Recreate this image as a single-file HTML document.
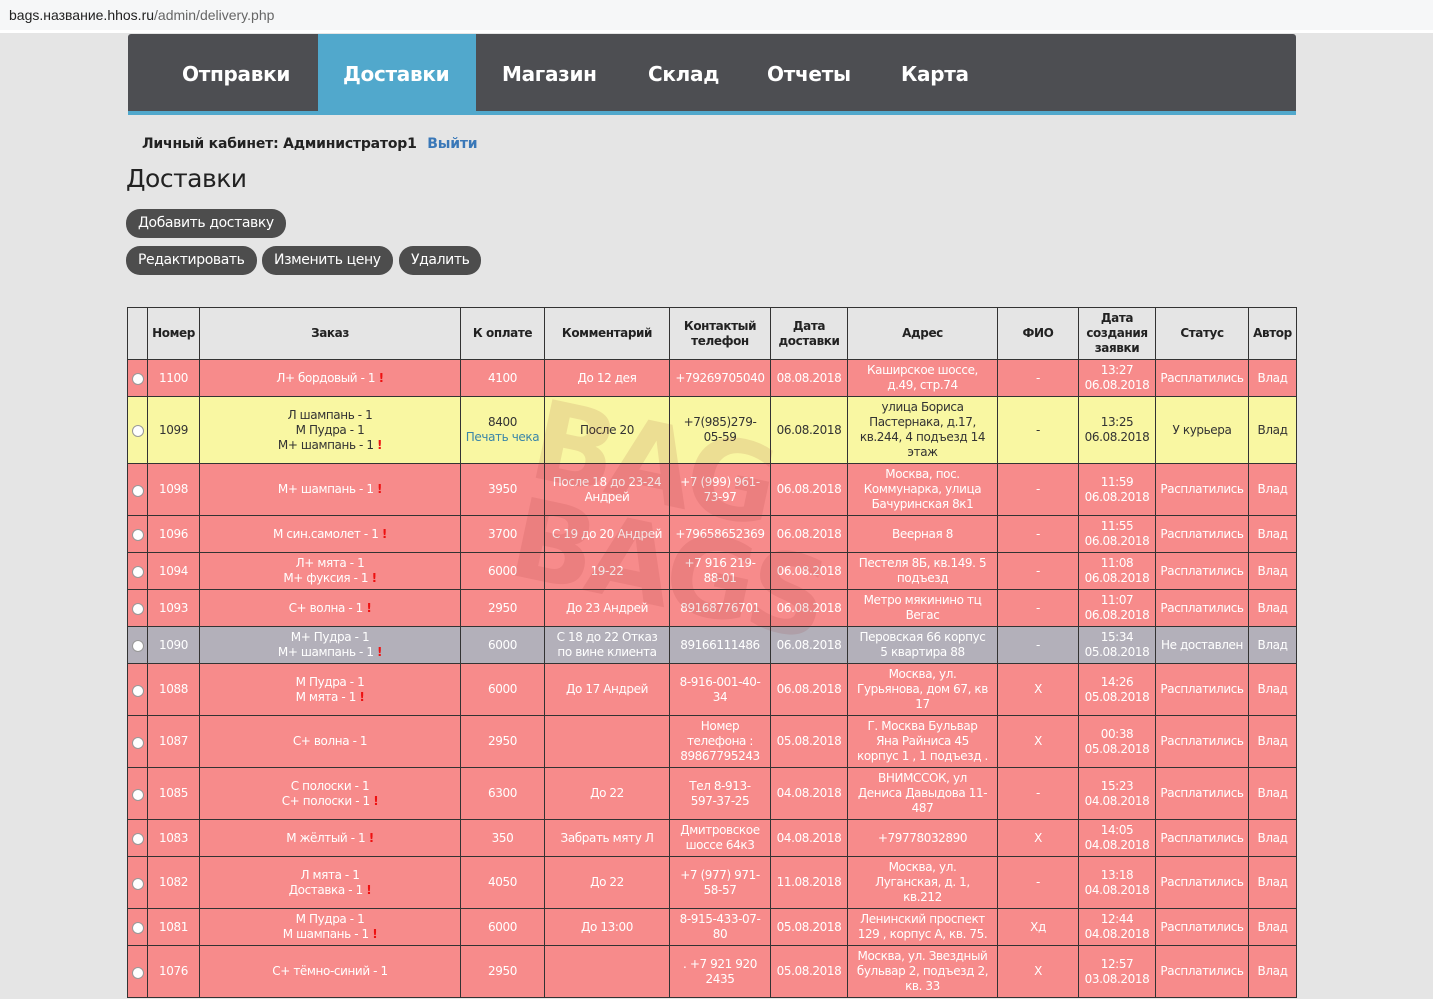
<!DOCTYPE html>
<html><head><meta charset="utf-8"><style>
body{margin:0;background:#e5e5e5;font-family:"DejaVu Sans","Liberation Sans",sans-serif;width:1433px;height:999px;overflow:hidden;position:relative}
.url{height:30px;background:#f6f7f8;border-bottom:3px solid #fff;font:14px "Liberation Sans",sans-serif;color:#222;line-height:30px;padding-left:9px}
.url span{color:#666}
.nav{position:absolute;left:128px;top:34px;width:1168px;height:77px;background:#4d4e52;border-bottom:4px solid #51a8cc;border-radius:3px 3px 0 0}
.nav a{position:absolute;display:block;top:0;height:77px;line-height:80px;color:#fff;font-weight:bold;font-size:20px;font-family:"DejaVu Sans",sans-serif;text-decoration:none;letter-spacing:-0.3px}
.lk{position:absolute;left:142px;top:136px;font:bold 14px "DejaVu Sans",sans-serif;color:#222;letter-spacing:-0.2px}
.lk b{color:#3a78b8;margin-left:6px}
h1{position:absolute;left:126px;top:164px;margin:0;font:25px "DejaVu Sans",sans-serif;color:#222;letter-spacing:-0.5px}
.btn{position:absolute;height:29px;line-height:29px;background:#4d4d4d;color:#fff;border-radius:14px;font-size:14px;padding:0 12px;letter-spacing:-0.4px}
table{position:absolute;left:127px;top:307px;border-collapse:collapse;table-layout:fixed;width:1170px}
td,th{border:1px solid #333;text-align:center;font-size:12px;padding:0 1px;overflow:hidden;line-height:15px;color:#fff;letter-spacing:-0.4px;white-space:nowrap}
th{background:#e5e5e5;color:#222}
tr.r td{background:#f78b8b}
tr.y td{background:#f9f7a2;color:#333}
tr.g td{background:#b3b0ba}
.e{color:#e11;font-weight:bold}
.rad{display:inline-block;width:10px;height:10px;border-radius:50%;background:#fff;border:1px solid #999;margin-top:6px}
.p{color:#3b86a8}
.wm{position:absolute;left:520px;top:420px;font:bold 110px "DejaVu Sans",sans-serif;color:rgba(150,40,40,0.12);transform:rotate(12deg);letter-spacing:-6px;line-height:100px;pointer-events:none}
</style></head><body>
<div class="url">bags.название.hhos.ru<span>/admin/delivery.php</span></div>
<div class="nav">
<div style="position:absolute;left:190px;top:0;width:158px;height:77px;background:#51a8cc"></div>
<a style="left:54px">Отправки</a><a style="left:215px">Доставки</a><a style="left:374px">Магазин</a><a style="left:520px">Склад</a><a style="left:639px">Отчеты</a><a style="left:773px">Карта</a>
</div>
<div class="lk">Личный кабинет: Администратор1 <b>Выйти</b></div>
<h1>Доставки</h1>
<div class="btn" style="left:126px;top:209px">Добавить доставку</div>
<div class="btn" style="left:126px;top:246px">Редактировать</div>
<div class="btn" style="left:262px;top:246px">Изменить цену</div>
<div class="btn" style="left:399px;top:246px">Удалить</div>
<table>
<colgroup><col style="width:20px"><col style="width:52px"><col style="width:261px"><col style="width:84px"><col style="width:125px"><col style="width:101px"><col style="width:77px"><col style="width:150px"><col style="width:81px"><col style="width:77px"><col style="width:93px"><col style="width:48px"></colgroup>
<tr style="height:52px"><th></th><th>Номер</th><th>Заказ</th><th>К оплате</th><th>Комментарий</th><th>Контактый<br>телефон</th><th>Дата<br>доставки</th><th>Адрес</th><th>ФИО</th><th>Дата<br>создания<br>заявки</th><th>Статус</th><th>Автор</th></tr>
<tr class="r" style="height:37px"><td><span class="rad"></span></td><td>1100</td><td>Л+ бордовый - 1 <span class="e">!</span></td><td>4100</td><td>До 12 дея</td><td>+79269705040</td><td>08.08.2018</td><td>Каширское шоссе,<br>д.49, стр.74</td><td>-</td><td>13:27<br>06.08.2018</td><td>Расплатились</td><td>Влад</td></tr>
<tr class="y" style="height:67px"><td><span class="rad"></span></td><td>1099</td><td>Л шампань - 1<br>М Пудра - 1<br>М+ шампань - 1 <span class="e">!</span></td><td>8400<br><span class="p">Печать чека</span></td><td>После 20</td><td>+7(985)279-<br>05-59</td><td>06.08.2018</td><td>улица Бориса<br>Пастернака, д.17,<br>кв.244, 4 подъезд 14<br>этаж</td><td>-</td><td>13:25<br>06.08.2018</td><td>У курьера</td><td>Влад</td></tr>
<tr class="r" style="height:52px"><td><span class="rad"></span></td><td>1098</td><td>М+ шампань - 1 <span class="e">!</span></td><td>3950</td><td>После 18 до 23-24<br>Андрей</td><td>+7 (999) 961-<br>73-97</td><td>06.08.2018</td><td>Москва, пос.<br>Коммунарка, улица<br>Бачуринская 8к1</td><td>-</td><td>11:59<br>06.08.2018</td><td>Расплатились</td><td>Влад</td></tr>
<tr class="r" style="height:37px"><td><span class="rad"></span></td><td>1096</td><td>М син.самолет - 1 <span class="e">!</span></td><td>3700</td><td>С 19 до 20 Андрей</td><td>+79658652369</td><td>06.08.2018</td><td>Веерная 8</td><td>-</td><td>11:55<br>06.08.2018</td><td>Расплатились</td><td>Влад</td></tr>
<tr class="r" style="height:37px"><td><span class="rad"></span></td><td>1094</td><td>Л+ мята - 1<br>М+ фуксия - 1 <span class="e">!</span></td><td>6000</td><td>19-22</td><td>+7 916 219-<br>88-01</td><td>06.08.2018</td><td>Пестеля 8Б, кв.149. 5<br>подъезд</td><td>-</td><td>11:08<br>06.08.2018</td><td>Расплатились</td><td>Влад</td></tr>
<tr class="r" style="height:37px"><td><span class="rad"></span></td><td>1093</td><td>С+ волна - 1 <span class="e">!</span></td><td>2950</td><td>До 23 Андрей</td><td>89168776701</td><td>06.08.2018</td><td>Метро мякинино тц<br>Вегас</td><td>-</td><td>11:07<br>06.08.2018</td><td>Расплатились</td><td>Влад</td></tr>
<tr class="g" style="height:37px"><td><span class="rad"></span></td><td>1090</td><td>М+ Пудра - 1<br>М+ шампань - 1 <span class="e">!</span></td><td>6000</td><td>С 18 до 22 Отказ<br>по вине клиента</td><td>89166111486</td><td>06.08.2018</td><td>Перовская 66 корпус<br>5 квартира 88</td><td>-</td><td>15:34<br>05.08.2018</td><td>Не доставлен</td><td>Влад</td></tr>
<tr class="r" style="height:52px"><td><span class="rad"></span></td><td>1088</td><td>М Пудра - 1<br>М мята - 1 <span class="e">!</span></td><td>6000</td><td>До 17 Андрей</td><td>8-916-001-40-<br>34</td><td>06.08.2018</td><td>Москва, ул.<br>Гурьянова, дом 67, кв<br>17</td><td>Х</td><td>14:26<br>05.08.2018</td><td>Расплатились</td><td>Влад</td></tr>
<tr class="r" style="height:52px"><td><span class="rad"></span></td><td>1087</td><td>С+ волна - 1</td><td>2950</td><td></td><td>Номер<br>телефона :<br>89867795243</td><td>05.08.2018</td><td>Г. Москва Бульвар<br>Яна Райниса 45<br>корпус 1 , 1 подъезд .</td><td>Х</td><td>00:38<br>05.08.2018</td><td>Расплатились</td><td>Влад</td></tr>
<tr class="r" style="height:52px"><td><span class="rad"></span></td><td>1085</td><td>С полоски - 1<br>С+ полоски - 1 <span class="e">!</span></td><td>6300</td><td>До 22</td><td>Тел 8-913-<br>597-37-25</td><td>04.08.2018</td><td>ВНИМССОК, ул<br>Дениса Давыдова 11-<br>487</td><td>-</td><td>15:23<br>04.08.2018</td><td>Расплатились</td><td>Влад</td></tr>
<tr class="r" style="height:37px"><td><span class="rad"></span></td><td>1083</td><td>М жёлтый - 1 <span class="e">!</span></td><td>350</td><td>Забрать мяту Л</td><td>Дмитровское<br>шоссе 64к3</td><td>04.08.2018</td><td>+79778032890</td><td>Х</td><td>14:05<br>04.08.2018</td><td>Расплатились</td><td>Влад</td></tr>
<tr class="r" style="height:52px"><td><span class="rad"></span></td><td>1082</td><td>Л мята - 1<br>Доставка - 1 <span class="e">!</span></td><td>4050</td><td>До 22</td><td>+7 (977) 971-<br>58-57</td><td>11.08.2018</td><td>Москва, ул.<br>Луганская, д. 1,<br>кв.212</td><td>-</td><td>13:18<br>04.08.2018</td><td>Расплатились</td><td>Влад</td></tr>
<tr class="r" style="height:37px"><td><span class="rad"></span></td><td>1081</td><td>М Пудра - 1<br>М шампань - 1 <span class="e">!</span></td><td>6000</td><td>До 13:00</td><td>8-915-433-07-<br>80</td><td>05.08.2018</td><td>Ленинский проспект<br>129 , корпус А, кв. 75.</td><td>Хд</td><td>12:44<br>04.08.2018</td><td>Расплатились</td><td>Влад</td></tr>
<tr class="r" style="height:52px"><td><span class="rad"></span></td><td>1076</td><td>С+ тёмно-синий - 1</td><td>2950</td><td></td><td>. +7 921 920<br>2435</td><td>05.08.2018</td><td>Москва, ул. Звездный<br>бульвар 2, подъезд 2,<br>кв. 33</td><td>Х</td><td>12:57<br>03.08.2018</td><td>Расплатились</td><td>Влад</td></tr>
</table>
<div class="wm">BAG<br>BAGS</div>
</body></html>
